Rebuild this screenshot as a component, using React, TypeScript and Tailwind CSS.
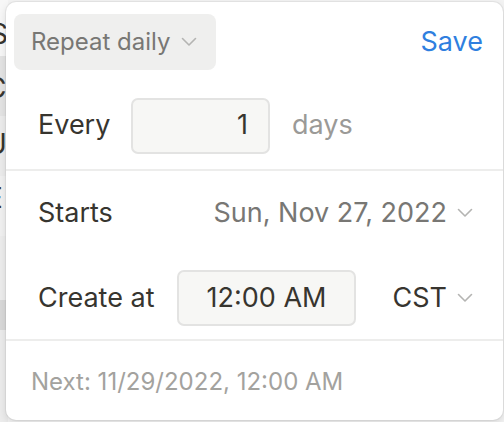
const font = { fontFamily: 'Inter, "Noto Sans", sans-serif' }

const Chevron = () => (
  <svg width="16" height="10" viewBox="0 0 16 10" className="ml-[10px] shrink-0">
    <path d="M1.5 1.5 L8 8 L14.5 1.5" fill="none" stroke="#b4b4b2" strokeWidth="1.6" strokeLinecap="round" strokeLinejoin="round" />
  </svg>
)

export default function App() {
  return (
    <div className="relative h-[422px] w-[504px] overflow-hidden bg-[#f3f3f3]" style={font}>
      {/* page behind the popover */}
      <div className="absolute inset-y-0 left-0 flex w-[8px] flex-col text-[28px] leading-none text-[#37352f]">
        <div className="h-[56px] bg-[#f7f7f7] pt-[20px] -ml-[10px]">S</div>
        <div className="h-[60px] bg-[#e4e4e4] pt-[18px] -ml-[14px]">C</div>
        <div className="h-[60px] bg-[#ececec] pt-[14px] -ml-[14px]">U</div>
        <div className="h-[60px] bg-[#f1f1f1] pt-[8px] -ml-[14px]">E</div>
        <div className="h-[64px] bg-[#ededed]" />
        <div className="h-[30px] bg-[#d9d9d9]" />
        <div className="flex-1 bg-[#ececec]" />
      </div>

      <div className="absolute left-[6px] top-[2px] right-[1px] bottom-[2px] flex flex-col rounded-[10px] bg-white shadow-[0_0_0_1px_rgba(15,15,15,0.05),0_3px_8px_rgba(15,15,15,0.12)]">
        <div className="flex items-center justify-between pl-[8px] pr-[20px] pt-[12px]">
          <button className="flex h-[56px] w-[202px] items-center rounded-[8px] bg-[#efefee] pl-[17px] text-[24px] text-[#787774]">
            Repeat daily
            <Chevron />
          </button>
          <span className="text-[27px] text-[#2f7fdf]">Save</span>
        </div>

        <div className="flex h-[101px] items-center pl-[32px] pt-[12px] border-b-2 border-[#ededec]">
          <span className="w-[93px] text-[27px] text-[#37352f]">Every</span>
          <div className="flex h-[56px] w-[139px] items-center justify-end rounded-[7px] border-2 border-[#e3e3e2] bg-[#f7f7f5] pr-[20px] text-[27px] text-[#37352f]">
            1
          </div>
          <span className="ml-[22px] text-[27px] text-[#9b9a97]">days</span>
        </div>

        <div className="flex h-[84px] items-center justify-between pl-[32px] pr-[30px]">
          <span className="text-[27px] text-[#37352f]">Starts</span>
          <span className="flex items-center text-[27px] text-[#787774]">
            Sun, Nov 27, 2022
            <Chevron />
          </span>
        </div>

        <div className="flex h-[86px] items-center pl-[32px] pr-[30px] pt-[2px] border-b-2 border-[#ededec]">
          <span className="w-[139px] text-[27px] text-[#37352f]">Create at</span>
          <div className="flex h-[56px] w-[179px] items-center justify-center rounded-[7px] border-2 border-[#e3e3e2] bg-[#f7f7f5] text-[27px] text-[#37352f]">
            12:00 AM
          </div>
          <span className="ml-auto flex items-center text-[27px] text-[#37352f]">
            CST
            <Chevron />
          </span>
        </div>

        <div className="flex flex-1 items-center pl-[25px] pt-[2px] text-[24px] text-[#a3a29e]">
          Next: 11/29/2022, 12:00 AM
        </div>
      </div>
    </div>
  )
}
